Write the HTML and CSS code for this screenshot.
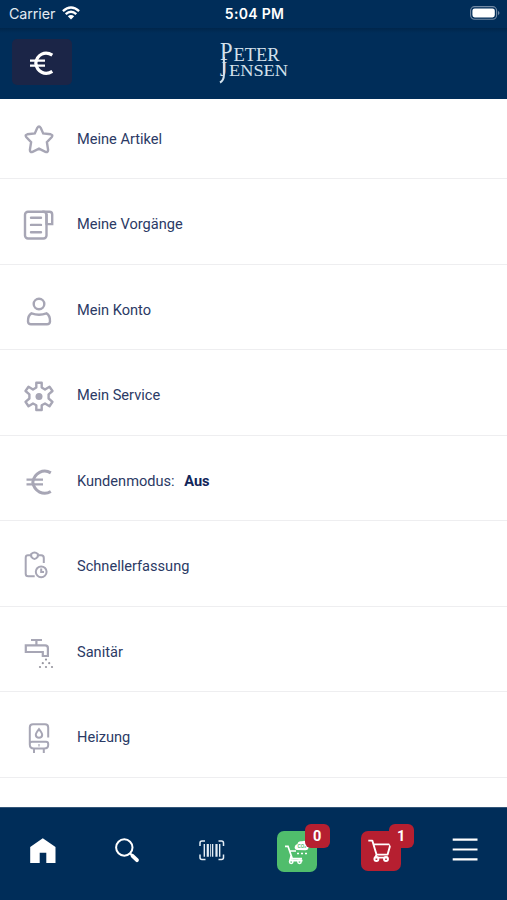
FILE: index.html
```html
<!DOCTYPE html>
<html lang="de">
<head>
<meta charset="utf-8">
<title>Peter Jensen</title>
<link rel="stylesheet" href="styles.css">
</head>
<body>
<div class="app">
  <div class="status">
    <div class="carrier"><span>Carrier</span>
      <svg width="18" height="14" viewBox="0 0 18 14" fill="none" stroke="#fff" stroke-width="2.3"><path d="M.9 5.2Q9-2.2 17.1 5.2M3.7 8.2Q9 3.2 14.3 8.2"/><path d="M9 13.6L5.8 10.2Q9 7.8 12.2 10.2Z" fill="#fff" stroke="none"/></svg>
    </div>
    <span class="time">5:04 PM</span>
    <svg class="battery" width="30" height="14" viewBox="0 0 30 14"><rect x=".6" y=".6" width="26" height="12.6" rx="4" fill="none" stroke="#738aa5" stroke-width="1.1"/><rect x="2.4" y="2.4" width="22.4" height="9" rx="2.3" fill="#fff"/><path d="M28 4.7Q31 7 28 9.2Z" fill="#738aa5"/></svg>
  </div>
  <header class="header">
    <button class="euro" aria-label="Kundenmodus"><svg width="60" height="46" viewBox="12 39 60 46" fill="none" stroke="#fff" stroke-width="3.2"><path d="M52.3 55.2C45 50.5 37 54.5 35.8 63.2C37 71.8 45 76 52.3 71.4"/><path d="M30 60.7H45M30 65.7H45" stroke-width="2.2"/></svg></button>
    <svg class="logo" width="74" height="48" viewBox="217 38 74 48">
      <text x="220" y="59.5" font-size="26" textLength="12.5" lengthAdjust="spacingAndGlyphs">P</text>
      <text x="233.5" y="60.5" font-size="18" textLength="46" lengthAdjust="spacingAndGlyphs">ETER</text>
      <text x="220" y="76" font-size="20" textLength="7" lengthAdjust="spacingAndGlyphs">J</text>
      <text x="229" y="76.3" font-size="17.5" textLength="59" lengthAdjust="spacingAndGlyphs">ENSEN</text>
      <path d="M223.9 57V75Q223.9 80.5 220 82.5" fill="none" stroke="#d3e1ec" stroke-width="2"/>
    </svg>
  </header>
  <main class="list">
    <a class="row"><svg class="icon" viewBox="21 122 36 36"><path d="M37.3 127.8Q39 125.2 40.7 127.8L43.2 133.4L50.7 134.3Q53.3 135 51.8 137L46.9 142.1L48.1 149.8Q48.2 152.7 45.4 151.8L39 148.7L32.6 151.8Q29.8 152.7 29.9 149.8L31.1 142.1L26.2 137Q24.7 135 27.3 134.3L34.8 133.4Z"/></svg><span class="label">Meine Artikel</span></a>
    <a class="row"><svg class="icon" viewBox="21 207.5 36 36"><rect x="25" y="212.3" width="21.5" height="26.7" rx="3"/><path d="M43 212.3H49.5Q52.2 212.3 52.2 215V224.6H46.5M46.5 224V215M31 218.2H41M31 225.4H41M31 232.7H41" stroke-linecap="round"/></svg><span class="label">Meine Vorgänge</span></a>
    <a class="row"><svg class="icon" viewBox="21 293 36 36"><circle cx="39" cy="304" r="5.3"/><path d="M31.5 313.4Q39 316 46.5 313.4Q50.2 315.5 50 321.5Q49.8 324.3 47 324.3H31Q28.2 324.3 28 321.5Q27.8 315.5 31.5 313.4Z"/></svg><span class="label">Mein Konto</span></a>
    <a class="row"><svg class="icon" viewBox="21 378.5 36 36"><path d="M36.3 383.3H41.7V388L45 390L49.5 387.2L52.5 391.5L48.6 394.8V399L52.5 402.3L49.5 406.7L45 404L41.7 405.7V410.5H36.3V405.7L33 404L28.5 406.7L25.5 402.3L29.4 399V394.8L25.5 391.5L28.5 387.2L33 390L36.3 388Z" stroke-linejoin="round"/><circle cx="39" cy="397" r="3.5" fill="#a7a6b5" stroke="none"/></svg><span class="label">Mein Service</span></a>
    <a class="row"><svg class="icon" viewBox="21 464 36 36"><path d="M50.8 472.9C43.5 468.5 34.2 472.8 32.8 482.3C34.2 491.5 43.5 496 50.8 491.5" stroke-width="3"/><path d="M26.5 479.6H43M26.5 484.4H43" stroke-width="2.1"/></svg><span class="label">Kundenmodus: <b>Aus</b></span></a>
    <a class="row"><svg class="icon thin" viewBox="21 549.5 36 36"><path d="M31 555.8H28Q25.7 555.8 25.7 558.2V574.2Q25.7 576.8 28.3 576.8H34.7M38 555.8H41.2Q43.8 555.8 43.8 558.4V563.5M31.2 554.5Q34.5 551.5 37.8 554.5V557.2Q34.5 561.8 31.2 557.2Z"/><circle cx="41.2" cy="572.3" r="5.4"/><path d="M41.2 569V572.5H44"/></svg><span class="label">Schnellerfassung</span></a>
    <a class="row"><svg class="icon thin" viewBox="21 635 36 36"><path d="M31 640H42M36.4 640V645.4M25.8 645.4H45.2Q47.9 645.4 47.9 648V656H42.8V652H25.8Z" stroke-width="2.2"/><g fill="#96959f" stroke="none"><circle cx="46" cy="659.6" r="1.1"/><circle cx="42.8" cy="663.2" r="1.1"/><circle cx="49.2" cy="663.2" r="1.1"/><circle cx="40" cy="667" r="1.1"/><circle cx="46" cy="667" r="1.1"/><circle cx="52" cy="667" r="1.1"/></g></svg><span class="label">Sanitär</span></a>
    <a class="row"><svg class="icon thin" viewBox="21 720.5 36 36"><path d="M48.2 738V728Q48.2 724.8 45 724.8H33Q29.8 724.8 29.8 728V745Q29.8 749 33.8 749H44.2Q48.2 749 48.2 745.5V744.5Q48.2 742.3 46 742.3H32Q29.8 742.3 29.8 744M34 749V753.5M43.8 749V753.5"/><path d="M39 744.4V747" stroke-width="1.2"/><path d="M39 729.7Q35.8 733.6 35.8 735.4Q36 738.2 39 738.2T42.2 735.4Q42.2 733.6 39 729.7Z"/></svg><span class="label">Heizung</span></a>
  </main>
  <nav class="tabs">
    <a class="tab"><svg width="30" height="30" viewBox="27.5 836 30 30"><path d="M43.3 838.3L56 847V863H46.8V852.8H40.2V863H30.7V847Z" fill="#fff"/></svg></a>
    <a class="tab"><svg width="30" height="30" viewBox="112 836 30 30" fill="none" stroke="#fff"><circle cx="124.3" cy="847.5" r="8.2" stroke-width="2"/><path d="M130 853.3L132 855.3" stroke-width="2"/><path d="M132.5 855.8L137 860.2" stroke-width="3.8" stroke-linecap="round"/></svg></a>
    <a class="tab"><svg width="30" height="30" viewBox="196 836 30 30" fill="none" stroke="#e4edf5"><path d="M205 841H202Q200 841 200 843V846M218.5 841H221.5Q223.5 841 223.5 843V846M200 854.5V857.5Q200 859.5 202 859.5H205.5M223.5 854.5V857.5Q223.5 859.5 221.5 859.5H218.5" stroke-width="1.5"/><path d="M204.3 844V856.7M212.6 844V856.7M219.7 844V856.7" stroke-width="1.4"/><path d="M207.8 844V856.7M216.5 844V856.7" stroke-width="2.2"/><path d="M210.5 844V856.7" stroke-width=".8"/></svg></a>
    <a class="tab"><span class="tile green"><svg width="40" height="41" viewBox="277 831 40 41" fill="none" stroke="#fff"><path d="M285 846.3H288L292.3 858.7H302M289.8 851H296M291.3 855L290 860.7H302.5" stroke-width="1.7"/><circle cx="291.2" cy="861.8" r="1.7" stroke-width="1.5"/><circle cx="299.5" cy="861.8" r="1.7" stroke-width="1.5"/><path d="M297 850Q293.7 849 295 846Q296 844 297.4 844.3Q298 840.5 302 841.3Q305.5 839.6 307 843Q310 844.5 308.5 848Q308 850.5 305 850.3Z" fill="#fff" stroke="none"/><path d="M297 853.5H308" stroke-width="1.6" stroke-dasharray="2 2"/><text x="297.6" y="848" class="co">CO₂</text></svg><span class="badge">0</span></span></a>
    <a class="tab"><span class="tile red"><svg width="40" height="40" viewBox="361 831 40 40" fill="none" stroke="#fff" stroke-width="1.9" stroke-linejoin="round"><path d="M368.3 840.6H372.3L376.5 854.6H387.6L390.4 844.4H373.5M376.5 854.6L375.3 857.6H388"/><circle cx="376.4" cy="859" r="2"/><circle cx="386" cy="859" r="2"/></svg><span class="badge">1</span></span></a>
    <a class="tab"><svg width="30" height="30" viewBox="450 836 30 30" stroke="#fff" stroke-width="2.2"><path d="M452.7 839.6H477.5M452.7 849.5H477.5M452.7 859.4H477.5"/></svg></a>
  </nav>
</div>
</body>
</html>
```
FILE: styles.css
```css
* { box-sizing: border-box; }
body { margin: 0; font-family: Roboto, "Liberation Sans", sans-serif; background: #fff; }
.app { width: 507px; height: 900px; display: flex; flex-direction: column; overflow: hidden; }
.status { height: 28px; flex: none; display: grid; grid-template-columns: 1fr auto 1fr; align-items: center; padding: 0 7px 1px 9px; background: #002d59; color: #fff; font: 14.3px Inter, sans-serif; }
.carrier { display: flex; align-items: center; gap: 6px; color: #e3eaf1; }
.carrier span { width: 47px; letter-spacing: -.1px; }
.carrier svg { margin-top: -2px; }
.time { font-weight: 600; font-size: 14px; letter-spacing: .3px; }
.battery { justify-self: end; margin-top: -1px; }
.header { height: 70.5px; flex: none; display: grid; grid-template-columns: 60px 1fr 60px; align-items: start; padding: 11px 12px 0; background: linear-gradient(#00264b, #002d59 5px); }
.euro { width: 60px; height: 46px; padding: 0; border: 0; border-radius: 5px; background: #1b2547; }
.euro svg { display: block; margin-left: -.5px; }
.logo { justify-self: center; margin-top: -1px; }
.logo text { font-family: "Liberation Serif", serif; fill: #d3e1ec; }
.list { flex: 1; min-height: 0; overflow: hidden; background: #fff; }
.row { height: 85.5px; display: flex; align-items: flex-end; gap: 20px; padding: 0 21px 20px; border-bottom: 1.5px solid #eeeef0; }
.row:first-child { height: 80.5px; }
.icon { width: 36px; height: 36px; flex: none; margin-bottom: .5px; fill: none; stroke: #a7a6b5; stroke-width: 2.4; }
.icon.thin { stroke-width: 2; }
.label { font-size: 14.6px; line-height: 36px; padding-bottom: 1.5px; color: #2b3a65; }
.label b { margin-left: 6px; color: #12265a; }
.tabs { height: 93px; flex: none; display: grid; grid-template-columns: repeat(6, 1fr); padding-top: 24px; background: #002d59; border-top: 1px solid #335679; }
.tab { display: flex; justify-content: center; align-items: flex-start; padding-top: 4px; }
.tile { position: relative; width: 40px; height: 41px; border-radius: 7px; margin: -5px -1px 0 0; }
.tile svg { display: block; }
.green { background: #50bd6c; margin-right: -2px; }
.red { background: #b61f30; height: 40px; }
.badge { position: absolute; left: 28px; top: -7px; width: 25px; height: 24px; border-radius: 6px; background: #b61f30; color: #fff; font-weight: 700; font-size: 14.5px; line-height: 25px; text-align: center; }
.co { font: 700 4.5px "Liberation Sans", sans-serif; fill: #50bd6c; stroke: none; }
```
